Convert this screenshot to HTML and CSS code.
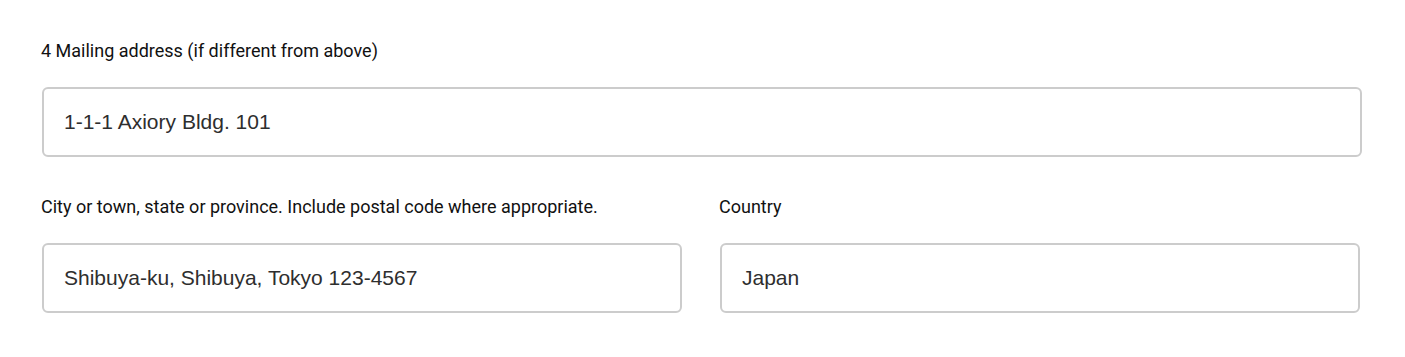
FILE: index.html
```html
<!DOCTYPE html>
<html lang="en">
<head>
    <meta charset="UTF-8">
    <meta name="viewport" content="width=device-width, initial-scale=1.0">
    <title>Mailing address</title>
    <link rel="stylesheet" href="styles.css">
</head>
<body>
    <form class="address-form">
        <div class="form-group">
            <label class="form-label" for="mail-street">4 Mailing address (if different from above)</label>
            <input type="text" id="mail-street" class="form-input" value="1-1-1 Axiory Bldg. 101">
        </div>
        <div class="form-row">
            <div class="form-group">
                <label class="form-label" for="mail-city">City or town, state or province. Include postal code where appropriate.</label>
                <input type="text" id="mail-city" class="form-input" value="Shibuya-ku, Shibuya, Tokyo 123-4567">
            </div>
            <div class="form-group">
                <label class="form-label" for="mail-country">Country</label>
                <input type="text" id="mail-country" class="form-input" value="Japan">
            </div>
        </div>
    </form>
</body>
</html>
```

FILE: styles.css
```css
body {
    margin: 0;
    font-family: Roboto, "Liberation Sans", Arial, sans-serif;
    background-color: #ffffff;
    color: #111111;
}

.address-form {
    width: 1320px;
    padding: 39px 0 0 42px;
}

.form-group {
    display: flex;
    flex-direction: column;
    margin-bottom: 38px;
}

.form-label {
    font-size: 18px;
    line-height: 24px;
    margin-bottom: 24px;
    margin-left: -1px;
}

.form-input {
    box-sizing: border-box;
    width: 100%;
    height: 70px;
    padding: 0 20px;
    border: 2px solid #cccccc;
    border-radius: 6px;
    font-family: "Liberation Sans", Arial, sans-serif;
    font-size: 21px;
    color: #2e2e2e;
    outline: none;
}

.form-row {
    display: grid;
    grid-template-columns: 640px 640px;
    column-gap: 38px;
}
```
